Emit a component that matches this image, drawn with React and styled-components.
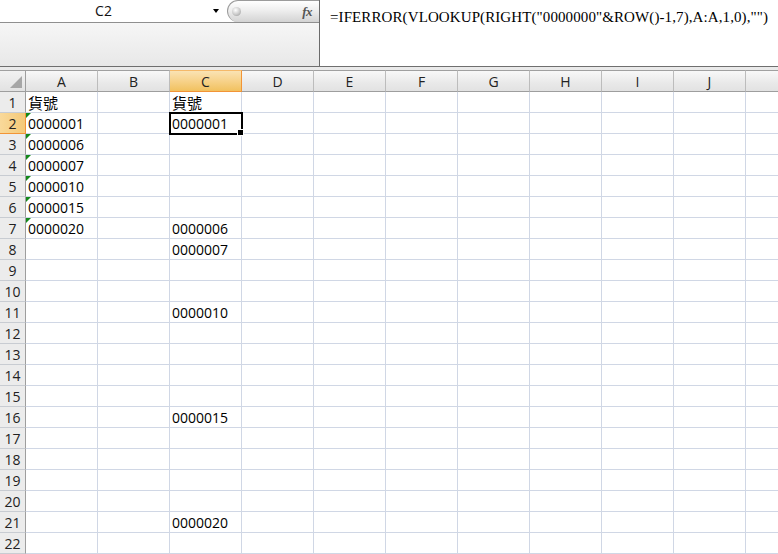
import React from 'react';
import styled, { createGlobalStyle, css } from 'styled-components';

const GlobalStyle = createGlobalStyle`
  html, body { margin: 0; padding: 0; background: #fff; overflow: hidden; }
  body { font-family: "Open Sans", "Liberation Sans", sans-serif; }
`;

const Window = styled.div`
  width: 778px;
  height: 554px;
  overflow: hidden;
  display: flex;
  flex-direction: column;
  background: #fff;
`;

const FormulaBar = styled.div`
  display: flex;
  height: 66px;
  flex: none;
`;

const LeftPane = styled.div`
  width: 319px;
  display: flex;
  flex-direction: column;
  border-right: 1px solid #6b6b6b;
`;

const NameRow = styled.div`
  height: 22px;
  display: flex;
  align-items: flex-start;
  border-bottom: 1px solid #8f8f8f;
  background: #fff;
`;

const NameBox = styled.div`
  width: 207px;
  height: 22px;
  text-align: center;
  font-size: 14px;
  line-height: 21px;
  color: #111;
`;

const ArrowWrap = styled.div`
  width: 20px;
  height: 22px;
  display: flex;
  align-items: center;
  padding-left: 6px;
  box-sizing: border-box;
`;

const Arrow = styled.div`
  width: 0;
  height: 0;
  border-left: 3.5px solid transparent;
  border-right: 3.5px solid transparent;
  border-top: 4px solid #000;
`;

const Pill = styled.div`
  margin-left: auto;
  width: 92px;
  height: 22px;
  box-sizing: border-box;
  border: 1px solid #9b9b9b;
  border-right: none;
  border-bottom: none;
  border-radius: 11px 0 0 11px;
  background: linear-gradient(#ffffff, #eeeeee 45%, #d3d3d3);
  display: flex;
  align-items: center;
  padding-left: 4px;
`;

const Knob = styled.div`
  width: 9px;
  height: 9px;
  border-radius: 50%;
  background: radial-gradient(circle at 40% 35%, #ffffff, #c9c9c9 55%, #8e8e8e);
`;

const Fx = styled.span`
  margin-left: auto;
  margin-right: 7px;
  font-family: "Liberation Serif", serif;
  font-style: italic;
  font-weight: bold;
  font-size: 13px;
  color: #555;
  letter-spacing: -0.5px;
`;

const GrayArea = styled.div`
  flex: 1;
  background: linear-gradient(#f6f6f6, #e8e8e8);
`;

const FormulaText = styled.div`
  flex: 1;
  padding: 7px 0 0 10px;
  font-family: "Liberation Serif", serif;
  font-size: 15px;
  line-height: 20px;
  letter-spacing: 0.1px;
  color: #000;
  white-space: nowrap;
  overflow: hidden;
`;

const Divider = styled.div`
  flex: none;
  height: 3px;
  border-top: 1px solid #6f6f6f;
  background: #eaeaea;
`;

const Row = styled.div`
  display: flex;
  flex: none;
  height: ${(p) => p.$h}px;
`;

const Corner = styled.div`
  width: 26px;
  height: 22px;
  box-sizing: border-box;
  border-top: 1px solid #a0a0a0;
  border-bottom: 1px solid #9e9e9e;
  border-right: 1px solid #9e9e9e;
  background: linear-gradient(#f2f2f2, #e2e2e2);
  display: flex;
  justify-content: flex-end;
  align-items: flex-end;
  padding: 0 3px 3px 0;
  flex: none;
`;

const CornerTri = styled.div`
  width: 0;
  height: 0;
  border-left: 12px solid transparent;
  border-bottom: 12px solid #a6a6a6;
`;

const selectedHeader = css`
  background: linear-gradient(#fae3b4, #f7d28a 50%, #f1c15f);
  border-color: #f29436;
  border-top-color: #f5b969;
`;

const ColHeader = styled.div`
  width: 72px;
  height: 22px;
  flex: none;
  box-sizing: border-box;
  border-top: 1px solid #a0a0a0;
  border-bottom: 1px solid #9e9e9e;
  border-right: 1px solid #bcbcbc;
  background: linear-gradient(#f8f8f8, #e9e9e9 60%, #e2e2e2);
  text-align: center;
  font-size: 14px;
  line-height: 21px;
  color: #222;
  ${(p) => p.$selected && selectedHeader}
`;

const RowHeader = styled.div`
  width: 26px;
  flex: none;
  box-sizing: border-box;
  border-right: 1px solid #9e9e9e;
  border-bottom: 1px solid #c8ccd2;
  background: #ececec;
  text-align: center;
  font-size: 14px;
  line-height: 20px;
  padding-top: 1px;
  overflow: hidden;
  color: #222;
  ${(p) => p.$selected && css`
    background: linear-gradient(90deg, #f9d99a, #f4c978);
    border-bottom-color: #f29436;
    border-right-color: #f29436;
  `}
`;

const Cell = styled.div`
  width: 72px;
  flex: none;
  position: relative;
  box-sizing: border-box;
  border-right: 1px solid #d0d7e5;
  border-bottom: 1px solid #d0d7e5;
  padding: 1px 0 0 2px;
  font-size: 14px;
  line-height: 20px;
  color: #000;
  white-space: nowrap;
  ${(p) => p.$selected && css`z-index: 2;`}
`;

const Flag = styled.div`
  position: absolute;
  top: 0;
  left: 0;
  width: 0;
  height: 0;
  border-top: 5px solid #13891a;
  border-right: 5px solid transparent;
`;

const Selection = styled.div`
  position: absolute;
  top: -1px;
  left: -1px;
  width: 74px;
  height: 23px;
  box-sizing: border-box;
  border: 2px solid #000;
  pointer-events: none;
`;

const Handle = styled.div`
  position: absolute;
  right: -3px;
  bottom: -3px;
  width: 5px;
  height: 5px;
  background: #000;
  border: 1px solid #fff;
`;

const CJK = styled.span`
  font-family: "Noto Sans CJK TC", "Noto Sans CJK SC", sans-serif;
  font-size: 15px;
  line-height: 19px;
`;

const COLS = ['A', 'B', 'C', 'D', 'E', 'F', 'G', 'H', 'I', 'J', ''];

const dataA = {
  1: '貨號', 2: '0000001', 3: '0000006', 4: '0000007', 5: '0000010', 6: '0000015', 7: '0000020',
};
const dataC = {
  1: '貨號', 2: '0000001', 7: '0000006', 8: '0000007', 11: '0000010', 16: '0000015', 21: '0000020',
};

function renderText(t) {
  if (!t) return null;
  if (/[^\x00-\x7f]/.test(t)) return <CJK>{t}</CJK>;
  return t;
}

export default function App() {
  const rows = Array.from({ length: 22 }, (_, i) => i + 1);
  return (
    <Window>
      <GlobalStyle />
      <FormulaBar>
        <LeftPane>
          <NameRow>
            <NameBox>C2</NameBox>
            <ArrowWrap><Arrow /></ArrowWrap>
            <Pill>
              <Knob />
              <Fx>fx</Fx>
            </Pill>
          </NameRow>
          <GrayArea />
        </LeftPane>
        <FormulaText>=IFERROR(VLOOKUP(RIGHT("0000000"&amp;ROW()-1,7),A:A,1,0),"")</FormulaText>
      </FormulaBar>
      <Divider />
      <Row $h={22}>
        <Corner><CornerTri /></Corner>
        {COLS.map((c, i) => (
          <ColHeader key={i} $selected={c === 'C'}>{c}</ColHeader>
        ))}
      </Row>
      {rows.map((r) => (
        <Row key={r} $h={21}>
          <RowHeader $selected={r === 2}>{r}</RowHeader>
          {COLS.map((c, i) => {
            const isSel = c === 'C' && r === 2;
            let text = null;
            if (c === 'A') text = dataA[r];
            if (c === 'C') text = dataC[r];
            return (
              <Cell key={i} $selected={isSel}>
                {c === 'A' && r >= 2 && r <= 7 && <Flag />}
                {renderText(text)}
                {isSel && (
                  <Selection>
                    <Handle />
                  </Selection>
                )}
              </Cell>
            );
          })}
        </Row>
      ))}
    </Window>
  );
}
